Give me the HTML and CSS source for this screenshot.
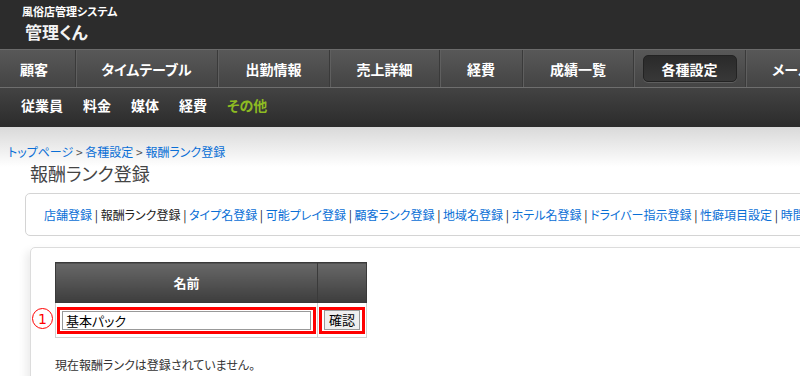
FILE: index.html
```html
<!DOCTYPE html>
<html lang="ja">
<head>
  <meta charset="UTF-8">
  <title>報酬ランク登録 - 管理くん</title>
  <link rel="stylesheet" href="styles.css">
</head>
<body>
  <div class="header">
    <div class="sub-title">風俗店管理システム</div>
    <div class="logo">管理くん</div>
  </div>
  <ul class="nav">
    <li>顧客</li>
    <li>タイムテーブル</li>
    <li>出勤情報</li>
    <li>売上詳細</li>
    <li>経費</li>
    <li>成績一覧</li>
    <li class="active"><span>各種設定</span></li>
    <li>メール</li>
  </ul>
  <ul class="subnav">
    <li>従業員</li>
    <li>料金</li>
    <li>媒体</li>
    <li>経費</li>
    <li class="current">その他</li>
  </ul>
  <div class="main">
    <p class="crumbs"><a href="#">トップページ</a> &gt; <a href="#">各種設定</a> &gt; <a href="#">報酬ランク登録</a></p>
    <h1 class="page-title">報酬ランク登録</h1>
    <div class="menu-box">
      <a href="#">店舗登録</a> | 報酬ランク登録 | <a href="#">タイプ名登録</a> | <a href="#">可能プレイ登録</a> | <a href="#">顧客ランク登録</a> | <a href="#">地域名登録</a> | <a href="#">ホテル名登録</a> | <a href="#">ドライバー指示登録</a> | <a href="#">性癖項目設定</a> | <a href="#">時間設定</a>
    </div>
    <div class="panel">
      <table class="rank-table">
        <tr>
          <th class="col-name">名前</th>
          <th class="col-btn"></th>
        </tr>
        <tr>
          <td class="col-name">
            <span class="mark">1</span>
            <div class="hl"><input class="txt" type="text" value="基本パック"></div>
          </td>
          <td class="col-btn">
            <div class="hl"><button class="btn">確認</button></div>
          </td>
        </tr>
      </table>
      <p class="note">現在報酬ランクは登録されていません。</p>
    </div>
  </div>
</body>
</html>
```

FILE: styles.css
```css
* {
  margin: 0;
  padding: 0;
  box-sizing: border-box;
}
body {
  width: 800px;
  height: 376px;
  overflow: hidden;
  background-color: #fff;
  font-family: "Noto Sans CJK JP", "DejaVu Sans", sans-serif;
  font-feature-settings: "palt";
  color: #333;
}
a {
  color: #0a6fd6;
  text-decoration: none;
}
ul {
  list-style: none;
}

/* header */
.header {
  height: 49px;
  padding: 4px 0 0 22px;
  background-color: #2c2c2c;
  color: #fff;
  font-weight: bold;
}
.sub-title {
  font-size: 11px;
  line-height: 14px;
}
.logo {
  margin: 4px 0 0 3px;
  font-size: 17px;
  line-height: 20px;
  color: #f2f2f2;
}

/* main nav */
.nav {
  display: flex;
  height: 39px;
  border-top: 1px solid #6b6b6b;
  border-bottom: 1px solid #6e6e6e;
  background: linear-gradient(#585858, #444);
  white-space: nowrap;
}
.nav li {
  display: flex;
  align-items: center;
  justify-content: center;
  flex-shrink: 0;
  color: #fff;
  font-size: 14px;
  font-weight: bold;
  border-right: 1px solid #3a3a3a;
  box-shadow: 1px 0 0 #5f5f5f;
}
.nav li:nth-child(1) { width: 76px; justify-content: flex-start; padding-left: 20px; }
.nav li:nth-child(2) { width: 142px; }
.nav li:nth-child(3) { width: 112px; }
.nav li:nth-child(4) { width: 110px; }
.nav li:nth-child(5) { width: 83px; }
.nav li:nth-child(6) { width: 111px; }
.nav li:nth-child(7) { width: 112px; }
.nav li:nth-child(8) { width: 110px; border-right: none; box-shadow: none; justify-content: flex-start; padding-left: 26px; }
.nav li.active span {
  display: flex;
  align-items: center;
  justify-content: center;
  width: 94px;
  height: 27px;
  border: 1px solid #232323;
  border-radius: 5px;
  background: linear-gradient(#2a2a2a, #383838);
  box-shadow: 0 1px 0 #5e5e5e;
}

/* sub nav */
.subnav {
  display: flex;
  gap: 20px;
  height: 39px;
  padding: 0 0 6px 21px;
  align-items: center;
  background: linear-gradient(#434343, #2b2b2b);
  color: #fff;
  font-size: 14px;
  font-weight: bold;
}
.subnav li.current {
  color: #8dbb22;
}

/* content */
.main {
  padding: 16px 0 0 8px;
  background: linear-gradient(#d9d9d9, #fff 40px);
  font-size: 12px;
}
.crumbs {
  line-height: 18px;
  color: #555;
}
.page-title {
  margin: -1px 0 0 22px;
  font-size: 18px;
  font-weight: normal;
  line-height: 26px;
  color: #444;
}
.menu-box {
  width: 900px;
  height: 43px;
  margin: 7px 0 0 17px;
  padding: 12px 0 0 18px;
  border: 1px solid #d4d4d4;
  border-radius: 5px;
  white-space: nowrap;
  line-height: 18px;
  color: #222;
}
.panel {
  width: 900px;
  height: 160px;
  margin: 11px 0 0 22px;
  padding: 14px 0 0 24px;
  border: 1px solid #dcdcdc;
  border-radius: 5px;
  box-shadow: -4px 4px 8px rgba(0, 0, 0, 0.08);
}

/* table */
.rank-table {
  border-collapse: collapse;
  width: 312px;
}
.rank-table th {
  height: 40px;
  border: 1px solid #3a3a3a;
  background: linear-gradient(#686868, #3d3d3d);
  color: #fff;
  font-size: 13px;
  font-weight: bold;
}
.rank-table td {
  height: 35px;
  border: 1px solid #d0d0d0;
  padding: 1px;
  position: relative;
}
.rank-table .col-name {
  width: 264px;
}
.rank-table .col-btn {
  width: 48px;
}
.hl {
  border: 3px solid #f00;
  padding: 1px 2px;
  height: 27px;
  display: flex;
  align-items: center;
}
.txt {
  width: 100%;
  height: 19px;
  border: 1px solid #999;
  padding: 0 3px;
  font-family: inherit;
  font-feature-settings: "palt";
  font-size: 13px;
  color: #000;
}
.btn {
  width: 36px;
  height: 20px;
  border: 1px solid #9a9a9a;
  background-color: #efefef;
  font-family: inherit;
  font-size: 13px;
  line-height: 16px;
  color: #000;
}
.mark {
  position: absolute;
  left: -24px;
  top: 5px;
  display: flex;
  align-items: center;
  justify-content: center;
  width: 21px;
  height: 21px;
  border: 1.5px solid #f00;
  border-radius: 50%;
  color: #f00;
  font-family: "DejaVu Sans", sans-serif;
  font-size: 14px;
}
.note {
  margin-top: 18px;
  color: #333;
}
```
